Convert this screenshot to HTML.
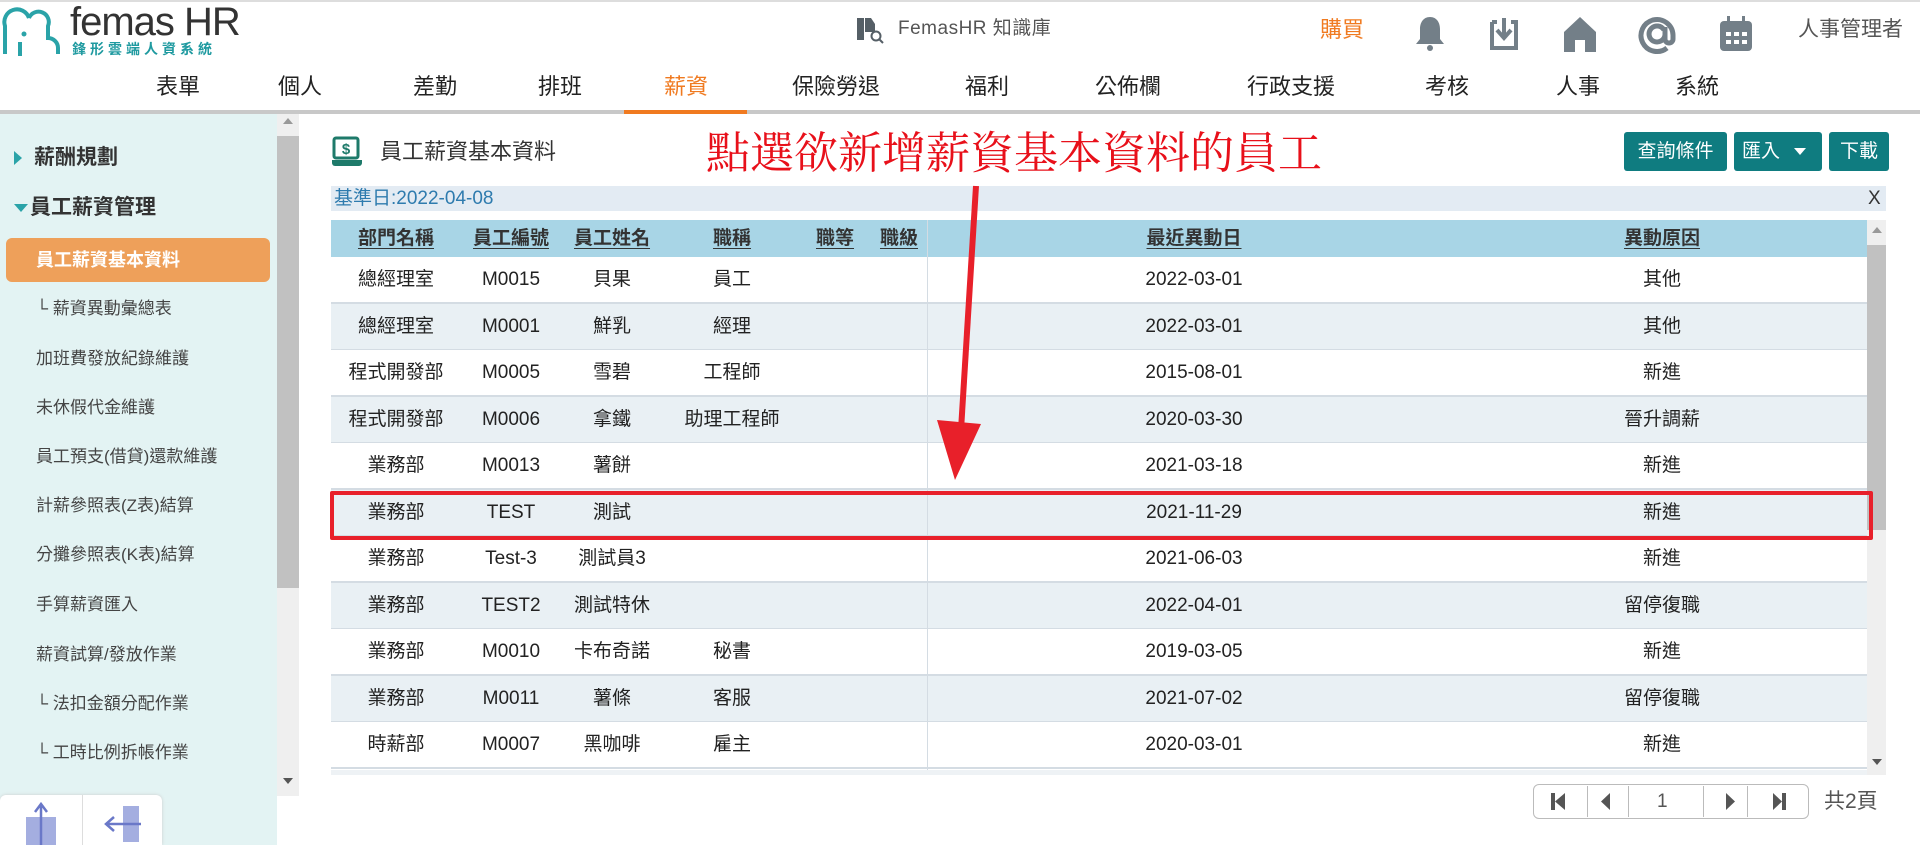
<!DOCTYPE html>
<html><head><meta charset="utf-8">
<style>
*{margin:0;padding:0;box-sizing:border-box}
body{width:1920px;height:845px;overflow:hidden;background:#fff;font-family:"Liberation Sans","Noto Sans CJK TC",sans-serif;position:relative;color:#222}
.a{position:absolute}
.nav{position:absolute;top:70px;line-height:34px;font-size:22px;color:#222;transform:translateX(-50%);white-space:nowrap}
.si{position:absolute;left:36px;font-size:17px;line-height:24px;color:#444;white-space:nowrap}
.c{position:absolute;transform:translateX(-50%);white-space:nowrap;font-size:19px;line-height:46px;height:46px;color:#222}
.hd{position:absolute;top:220px;line-height:37px;transform:translateX(-50%);white-space:nowrap;font-size:19px;font-weight:bold;color:#333;text-decoration:underline;text-underline-offset:4px}
.row{position:absolute;left:331px;width:1536px;height:47px;border-bottom:2px solid #d4dce3}
.btn{position:absolute;top:132px;height:39px;line-height:39px;background:#0f7c80;color:#fff;font-size:19px;border-radius:3px;display:flex;align-items:center;justify-content:center}
.ic{position:absolute;top:14px}
.r{position:absolute;left:0;width:1920px;height:46px}
</style></head><body>
<div class="a" style="left:0;top:0;width:1920px;height:2px;background:#ddd"></div>
<svg class="a" style="left:2px;top:4px" width="60" height="54" viewBox="0 0 60 54"><path d="M3 50 V22 A12 12 0 0 1 27 14 M27 14 A10 10 0 0 1 46 22 V34 A10 10 0 0 1 56 44 V50" fill="none" stroke="#2aa3a8" stroke-width="4"/><circle cx="22" cy="30" r="2.5" fill="#2aa3a8"/><path d="M18 38 V52" stroke="#2aa3a8" stroke-width="4"/></svg>
<div class="a" style="left:70px;top:0;font-size:40px;line-height:44px;color:#333;letter-spacing:-1px">femas HR</div>
<div class="a" style="left:72px;top:40px;font-size:14px;line-height:18px;color:#1f9aa0;letter-spacing:4px;font-weight:bold">鋒形雲端人資系統</div>
<svg class="a" style="left:855px;top:15px" width="30" height="30" viewBox="0 0 30 30"><rect x="2" y="3" width="7" height="22" fill="#555f66"/><path d="M10 3 h6 l4 6 v8 h-10z" fill="#555f66"/><circle cx="21" cy="21" r="4.5" fill="none" stroke="#555f66" stroke-width="2"/><path d="M24 24 l4 4" stroke="#555f66" stroke-width="2"/></svg>
<div class="a" style="left:898px;top:14px;line-height:30px;font-size:19px;color:#555;letter-spacing:0.5px">FemasHR 知識庫</div>
<div class="a" style="left:1320px;top:14px;line-height:32px;font-size:22px;color:#f07a20">購買</div>
<svg class="ic" style="left:1410px" width="40" height="40" viewBox="0 0 40 40"><path d="M20 3 c-7 0-10 6-10 12 v10 l-4 5 h28 l-4-5 v-10 c0-6-3-12-10-12z" fill="#737f88"/><circle cx="20" cy="34" r="3" fill="#737f88"/></svg>
<svg class="ic" style="left:1484px" width="40" height="40" viewBox="0 0 40 40"><path d="M8 8 h5 M27 8 h5 v26 h-24 v-26" fill="none" stroke="#737f88" stroke-width="4"/><path d="M20 4 v18 M13 16 l7 8 l7-8" fill="none" stroke="#737f88" stroke-width="4"/></svg>
<svg class="ic" style="left:1560px" width="40" height="40" viewBox="0 0 40 40"><path d="M20 3 L36 18 V38 H25 V26 H15 V38 H4 V18Z" fill="#737f88"/></svg>
<svg class="ic" style="left:1636px" width="42" height="42" viewBox="0 0 42 42"><path d="M29 21 a8 8 0 1 1 -1 -5 M29 13 v12 a4 4 0 0 0 8 0 v-4 a16 16 0 1 0 -6 13" fill="none" stroke="#737f88" stroke-width="5"/></svg>
<svg class="ic" style="left:1716px" width="40" height="40" viewBox="0 0 40 40"><rect x="4" y="7" width="32" height="30" rx="4" fill="#737f88"/><rect x="11" y="2" width="3" height="8" fill="#737f88"/><rect x="26" y="2" width="3" height="8" fill="#737f88"/><g fill="#fff"><rect x="10" y="18" width="5" height="4"/><rect x="18" y="18" width="5" height="4"/><rect x="26" y="18" width="5" height="4"/><rect x="10" y="26" width="5" height="4"/><rect x="18" y="26" width="5" height="4"/><rect x="26" y="26" width="5" height="4"/></g></svg>
<div class="a" style="left:1798px;top:14px;line-height:32px;font-size:21px;color:#555">人事管理者</div>

<div class="nav" style="left:178px">表單</div>
<div class="nav" style="left:300px">個人</div>
<div class="nav" style="left:435px">差勤</div>
<div class="nav" style="left:560px">排班</div>
<div class="nav" style="left:686px;color:#f07a20">薪資</div>
<div class="nav" style="left:836px">保險勞退</div>
<div class="nav" style="left:987px">福利</div>
<div class="nav" style="left:1128px">公佈欄</div>
<div class="nav" style="left:1291px">行政支援</div>
<div class="nav" style="left:1447px">考核</div>
<div class="nav" style="left:1578px">人事</div>
<div class="nav" style="left:1697px">系統</div>
<div class="a" style="left:0;top:110px;width:1920px;height:4px;background:#c8c8c8"></div>
<div class="a" style="left:624px;top:110px;width:123px;height:4px;background:#f07a20"></div>

<div class="a" style="left:0;top:114px;width:277px;height:731px;background:#e3f3f3"></div>
<div class="a" style="left:277px;top:114px;width:22px;height:682px;background:#efefef"></div>
<div class="a" style="left:277px;top:136px;width:22px;height:452px;background:#c1c1c1"></div>
<div class="a" style="left:283px;top:118px;width:0;height:0;border-left:5px solid transparent;border-right:5px solid transparent;border-bottom:6px solid #999"></div>
<div class="a" style="left:283px;top:778px;width:0;height:0;border-left:5px solid transparent;border-right:5px solid transparent;border-top:6px solid #555"></div>
<div class="a" style="left:14px;top:151px;width:0;height:0;border-top:7px solid transparent;border-bottom:7px solid transparent;border-left:8px solid #2aa3a8"></div>
<div class="si" style="left:34px;top:144px;font-size:21px;line-height:28px;font-weight:bold;color:#333">薪酬規劃</div>
<div class="a" style="left:14px;top:204px;width:0;height:0;border-left:7px solid transparent;border-right:7px solid transparent;border-top:8px solid #2aa3a8"></div>
<div class="si" style="left:30px;top:194px;font-size:21px;line-height:28px;font-weight:bold;color:#333">員工薪資管理</div>
<div class="a" style="left:6px;top:238px;width:264px;height:44px;background:#eea05a;border-radius:6px"></div>
<div class="si" style="left:36px;top:248px;font-size:18px;font-weight:bold;color:#fff">員工薪資基本資料</div>
<div class="si" style="top:297px">└ 薪資異動彙總表</div>
<div class="si" style="top:347px">加班費發放紀錄維護</div>
<div class="si" style="top:396px">未休假代金維護</div>
<div class="si" style="top:445px">員工預支(借貸)還款維護</div>
<div class="si" style="top:494px">計薪參照表(Z表)結算</div>
<div class="si" style="top:543px">分攤參照表(K表)結算</div>
<div class="si" style="top:593px">手算薪資匯入</div>
<div class="si" style="top:643px">薪資試算/發放作業</div>
<div class="si" style="top:692px">└ 法扣金額分配作業</div>
<div class="si" style="top:741px">└ 工時比例拆帳作業</div>
<div class="a" style="left:0;top:795px;width:162px;height:50px;background:#fff;border-radius:6px 6px 0 0;box-shadow:0 0 3px #ccc"></div>
<div class="a" style="left:82px;top:795px;width:1px;height:50px;background:#ddd"></div>
<div class="a" style="left:26px;top:817px;width:30px;height:28px;background:#a4aee0"></div>
<svg class="a" style="left:26px;top:800px" width="30" height="45"><path d="M15 45 V4 M9 12 L15 4 L21 12" fill="none" stroke="#6a78c8" stroke-width="2.5"/></svg>
<div class="a" style="left:123px;top:806px;width:16px;height:36px;background:#a4aee0"></div>
<svg class="a" style="left:103px;top:806px" width="40" height="36"><path d="M3 18 H38 M11 11 L3 18 L11 25" fill="none" stroke="#6a78c8" stroke-width="2.5"/></svg>

<svg class="a" style="left:331px;top:136px" width="32" height="30" viewBox="0 0 32 30"><rect x="3" y="2" width="24" height="20" rx="2" fill="none" stroke="#1e7a6a" stroke-width="3"/><text x="15" y="18" font-size="15" font-weight="bold" fill="#1e7a6a" text-anchor="middle" font-family="Liberation Sans">$</text><path d="M1 24 h30 v3 a3 3 0 0 1 -3 3 h-24 a3 3 0 0 1 -3 -3z" fill="#1e7a6a"/></svg>
<div class="a" style="left:380px;top:136px;line-height:32px;font-size:22px;color:#333">員工薪資基本資料</div>
<div class="a" style="left:706px;top:126px;line-height:56px;font-size:44px;color:#e8101a;font-family:'Liberation Serif','Noto Serif CJK SC',serif;white-space:nowrap">點選欲新增薪資基本資料的員工</div>
<div class="btn" style="left:1624px;width:103px">查詢條件</div>
<div class="btn" style="left:1734px;width:88px;justify-content:flex-start;padding-left:8px">匯入<span style="margin-left:14px;width:0;height:0;border-left:6px solid transparent;border-right:6px solid transparent;border-top:7px solid #fff"></span></div>
<div class="btn" style="left:1829px;width:60px">下載</div>

<div class="a" style="left:331px;top:186px;width:1555px;height:25px;background:#e3ebf3"></div>
<div class="a" style="left:334px;top:186px;line-height:25px;font-size:19px;color:#2e7bae">基準日:2022-04-08</div>
<div class="a" style="left:1868px;top:186px;line-height:25px;font-size:19px;color:#333">X</div>

<div class="a" style="left:331px;top:220px;width:1536px;height:37px;background:#a8d5e6"></div>
<div class="a" style="left:1867px;top:220px;width:19px;height:555px;background:#efefef"></div>
<div class="a" style="left:1867px;top:245px;width:19px;height:285px;background:#c1c1c1"></div>
<div class="a" style="left:1872px;top:227px;border-left:5px solid transparent;border-right:5px solid transparent;border-bottom:6px solid #999"></div>
<div class="a" style="left:1872px;top:759px;border-left:5px solid transparent;border-right:5px solid transparent;border-top:6px solid #555"></div>
<div class="hd" style="left:396px">部門名稱</div>
<div class="hd" style="left:511px">員工編號</div>
<div class="hd" style="left:612px">員工姓名</div>
<div class="hd" style="left:732px">職稱</div>
<div class="hd" style="left:835px">職等</div>
<div class="hd" style="left:899px">職級</div>
<div class="hd" style="left:1194px">最近異動日</div>
<div class="hd" style="left:1662px">異動原因</div>

<div class="row" style="top:257px;background:#fff"></div>
<div class="row" style="top:303.5px;background:#e9f0f4"></div>
<div class="row" style="top:350px;background:#fff"></div>
<div class="row" style="top:396.5px;background:#e9f0f4"></div>
<div class="row" style="top:443px;background:#fff"></div>
<div class="row" style="top:489.5px;background:#e9f0f4"></div>
<div class="row" style="top:536px;background:#fff"></div>
<div class="row" style="top:582.5px;background:#e9f0f4"></div>
<div class="row" style="top:629px;background:#fff"></div>
<div class="row" style="top:675.5px;background:#e9f0f4"></div>
<div class="row" style="top:722px;background:#fff"></div>
<div class="a" style="left:927px;top:220px;width:1px;height:550px;background:#d4dce3"></div>
<div class="a" style="left:331px;top:770px;width:1536px;height:5px;background:#eef2f5"></div>

<div class="r" style="top:257px"><div class="c" style="left:396px">總經理室</div><div class="c" style="left:511px">M0015</div><div class="c" style="left:612px">貝果</div><div class="c" style="left:732px">員工</div><div class="c" style="left:1194px">2022-03-01</div><div class="c" style="left:1662px">其他</div></div>
<div class="r" style="top:303.5px"><div class="c" style="left:396px">總經理室</div><div class="c" style="left:511px">M0001</div><div class="c" style="left:612px">鮮乳</div><div class="c" style="left:732px">經理</div><div class="c" style="left:1194px">2022-03-01</div><div class="c" style="left:1662px">其他</div></div>
<div class="r" style="top:350px"><div class="c" style="left:396px">程式開發部</div><div class="c" style="left:511px">M0005</div><div class="c" style="left:612px">雪碧</div><div class="c" style="left:732px">工程師</div><div class="c" style="left:1194px">2015-08-01</div><div class="c" style="left:1662px">新進</div></div>
<div class="r" style="top:396.5px"><div class="c" style="left:396px">程式開發部</div><div class="c" style="left:511px">M0006</div><div class="c" style="left:612px">拿鐵</div><div class="c" style="left:732px">助理工程師</div><div class="c" style="left:1194px">2020-03-30</div><div class="c" style="left:1662px">晉升調薪</div></div>
<div class="r" style="top:443px"><div class="c" style="left:396px">業務部</div><div class="c" style="left:511px">M0013</div><div class="c" style="left:612px">薯餅</div><div class="c" style="left:1194px">2021-03-18</div><div class="c" style="left:1662px">新進</div></div>
<div class="r" style="top:489.5px"><div class="c" style="left:396px">業務部</div><div class="c" style="left:511px">TEST</div><div class="c" style="left:612px">測試</div><div class="c" style="left:1194px">2021-11-29</div><div class="c" style="left:1662px">新進</div></div>
<div class="r" style="top:536px"><div class="c" style="left:396px">業務部</div><div class="c" style="left:511px">Test-3</div><div class="c" style="left:612px">測試員3</div><div class="c" style="left:1194px">2021-06-03</div><div class="c" style="left:1662px">新進</div></div>
<div class="r" style="top:582.5px"><div class="c" style="left:396px">業務部</div><div class="c" style="left:511px">TEST2</div><div class="c" style="left:612px">測試特休</div><div class="c" style="left:1194px">2022-04-01</div><div class="c" style="left:1662px">留停復職</div></div>
<div class="r" style="top:629px"><div class="c" style="left:396px">業務部</div><div class="c" style="left:511px">M0010</div><div class="c" style="left:612px">卡布奇諾</div><div class="c" style="left:732px">秘書</div><div class="c" style="left:1194px">2019-03-05</div><div class="c" style="left:1662px">新進</div></div>
<div class="r" style="top:675.5px"><div class="c" style="left:396px">業務部</div><div class="c" style="left:511px">M0011</div><div class="c" style="left:612px">薯條</div><div class="c" style="left:732px">客服</div><div class="c" style="left:1194px">2021-07-02</div><div class="c" style="left:1662px">留停復職</div></div>
<div class="r" style="top:722px"><div class="c" style="left:396px">時薪部</div><div class="c" style="left:511px">M0007</div><div class="c" style="left:612px">黑咖啡</div><div class="c" style="left:732px">雇主</div><div class="c" style="left:1194px">2020-03-01</div><div class="c" style="left:1662px">新進</div></div>

<div class="a" style="left:330px;top:491px;width:1543px;height:49px;border:4px solid #e8202a;border-radius:2px"></div>
<svg class="a" style="left:0;top:0" width="1920" height="845"><path d="M976 186 L961 430" stroke="#e8202a" stroke-width="6" fill="none"/><path d="M937 420 L981 424 L955 480Z" fill="#e8202a"/></svg>

<div class="a" style="left:1533px;top:784px;width:276px;height:35px;border:1px solid #bbb;border-radius:6px;background:#fff"></div>
<div class="a" style="left:1587px;top:786px;width:1px;height:31px;background:#bbb"></div>
<div class="a" style="left:1628px;top:786px;width:1px;height:31px;background:#bbb"></div>
<div class="a" style="left:1703px;top:786px;width:1px;height:31px;background:#bbb"></div>
<div class="a" style="left:1747px;top:786px;width:1px;height:31px;background:#bbb"></div>
<svg class="a" style="left:1533px;top:784px" width="276" height="35"><g fill="#555"><rect x="18" y="9" width="4" height="17"/><path d="M32 9 V26 L22 17.5Z"/><path d="M77 9 V26 L68 17.5Z"/><path d="M193 9 V26 L202 17.5Z"/><path d="M240 9 V26 L249 17.5Z"/><rect x="249" y="9" width="4" height="17"/></g></svg>
<div class="a" style="left:1657px;top:784px;line-height:35px;font-size:19px;color:#555">1</div>
<div class="a" style="left:1824px;top:784px;line-height:35px;font-size:21px;color:#555">共2頁</div>
</body></html>
